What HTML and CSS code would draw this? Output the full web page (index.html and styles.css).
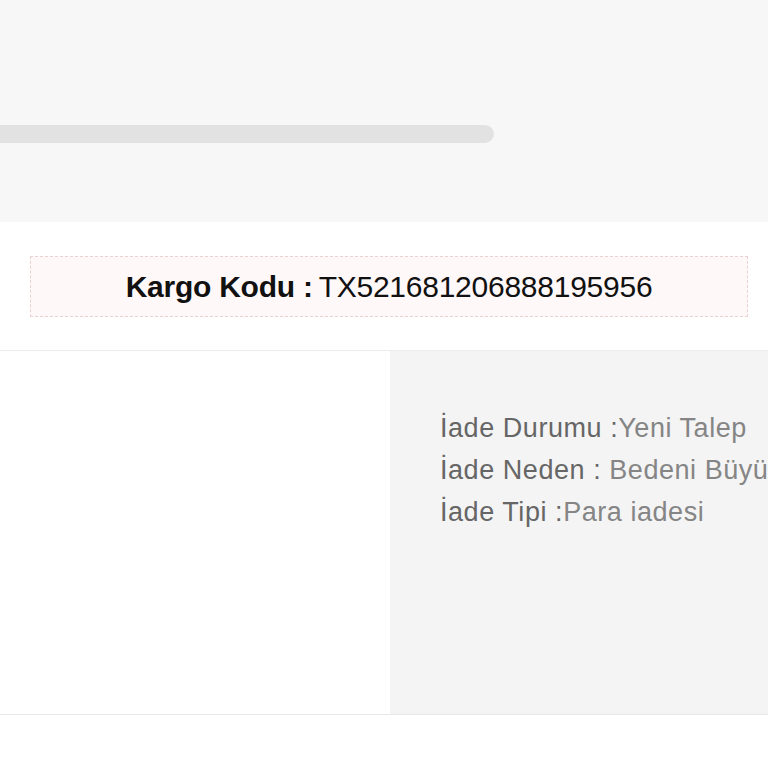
FILE: index.html
```html
<!DOCTYPE html>
<html lang="tr">
<head>
<meta charset="utf-8">
<link rel="stylesheet" href="styles.css">
</head>
<body>
<div class="top">
  <div class="progress"></div>
</div>
<div class="cargo">
  <div class="cargo-box"><b>Kargo Kodu :</b> TX521681206888195956</div>
</div>
<div class="details">
  <div class="left"></div>
  <div class="right">
    <div class="row"><span class="lbl">İade Durumu :</span><span class="val">Yeni Talep</span></div>
    <div class="row"><span class="lbl">İade Neden :</span><span class="val"> Bedeni Büyük Geldi</span></div>
    <div class="row"><span class="lbl">İade Tipi :</span><span class="val">Para iadesi</span></div>
  </div>
</div>
</body>
</html>
```
FILE: styles.css
```css
html, body {
  margin: 0;
  padding: 0;
  background: #ffffff;
  font-family: "Liberation Sans", Arial, sans-serif;
  overflow: hidden;
}
.top {
  height: 222px;
  background: #f7f7f7;
  padding-top: 125px;
  box-sizing: border-box;
}
.progress {
  width: 494px;
  height: 18px;
  background: #e2e2e2;
  border-radius: 0 9px 9px 0;
}
.cargo {
  background: #ffffff;
  padding: 34px 20px 33px 30px;
  border-bottom: 1px solid #ececec;
}
.cargo-box {
  height: 59px;
  border: 1px dashed #ead2d2;
  background: #fff8f8;
  display: flex;
  align-items: center;
  justify-content: center;
  font-size: 30px;
  color: #111;
  letter-spacing: -0.25px;
}
.cargo-box b {
  font-weight: bold;
  margin-right: 6px;
}
.details {
  display: flex;
  height: 363px;
  border-bottom: 1px solid #e8e8e8;
}
.left {
  width: 390px;
  background: #ffffff;
}
.right {
  flex: 1;
  background: #f4f4f4;
  padding: 56px 0 0 50px;
  white-space: nowrap;
  overflow: hidden;
}
.row {
  font-size: 27px;
  line-height: 42px;
  letter-spacing: 0.55px;
}
.lbl {
  color: #666666;
}
.val {
  color: #858585;
}
```
